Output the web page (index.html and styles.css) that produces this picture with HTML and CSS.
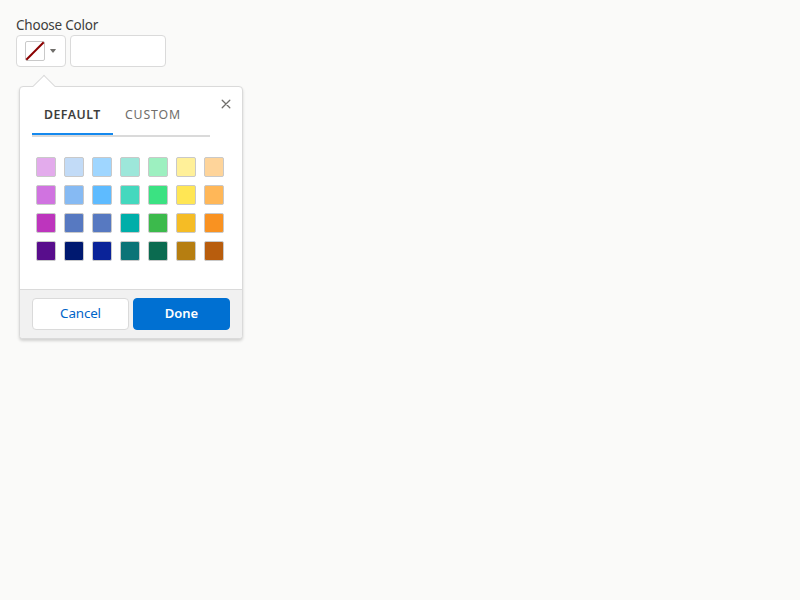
FILE: index.html
```html
<!DOCTYPE html>
<html lang="en">
<head>
<meta charset="utf-8">
<title>Color Picker</title>
<link rel="stylesheet" href="styles.css">
</head>
<body>
<div class="picker">
  <label class="label" for="hex">Choose Color</label>
  <div class="controls">
    <button class="trigger" aria-label="Choose color">
      <svg class="empty" width="20" height="20" viewBox="0 0 20 20"><rect x=".5" y=".5" width="19" height="19" rx="1.5" fill="#fff" stroke="#c9c9c9"/><path d="M1.3 18.7 18.7 1.3" stroke="#8b0000" stroke-width="2"/></svg>
      <svg class="caret" width="6" height="4" viewBox="0 0 6 4"><path d="M.5 0h5q.6 0 .3.5L3.4 3.6q-.4.4-.8 0L.2.5Q-.1 0 .5 0z" fill="#706e6b"/></svg>
    </button>
    <input class="hex" id="hex" type="text">
  </div>
  <section class="popover">
    <span class="nub"></span>
    <button class="close" aria-label="Close"><svg width="10" height="10" viewBox="0 0 10 10"><path d="M1.2 1.2l7.6 7.6M8.8 1.2L1.2 8.8" stroke="#706e6b" stroke-width="1.3" stroke-linecap="round"/></svg></button>
    <div class="body">
      <div class="tabs">
        <a class="tab active">Default</a>
        <a class="tab">Custom</a>
      </div>
      <div class="swatches">
        <i style="background:#e3abec"></i><i style="background:#c2dbf7"></i><i style="background:#9fd6ff"></i><i style="background:#9de7da"></i><i style="background:#9df0c0"></i><i style="background:#fff099"></i><i style="background:#fed49a"></i>
        <i style="background:#d073e0"></i><i style="background:#86baf3"></i><i style="background:#5ebbff"></i><i style="background:#44d8be"></i><i style="background:#3be282"></i><i style="background:#ffe654"></i><i style="background:#ffb758"></i>
        <i style="background:#bd35bd"></i><i style="background:#5779c1"></i><i style="background:#5779c1"></i><i style="background:#00aea9"></i><i style="background:#3cba4c"></i><i style="background:#f5bc25"></i><i style="background:#f99221"></i>
        <i style="background:#580d8c"></i><i style="background:#001970"></i><i style="background:#0a2399"></i><i style="background:#0b7477"></i><i style="background:#0b6b50"></i><i style="background:#b67e11"></i><i style="background:#b85d0d"></i>
      </div>
    </div>
    <footer class="footer">
      <button class="btn">Cancel</button>
      <button class="btn brand">Done</button>
    </footer>
  </section>
</div>
</body>
</html>
```
FILE: styles.css
```css
* { box-sizing: border-box; }
body {
  margin: 0;
  padding: 16px;
  background: #fafaf9;
  color: #3e3e3c;
  font: 13px/19px "Noto Sans", sans-serif;
}
button { font: inherit; padding: 0; }
.label {
  display: block;
  height: 19px;
  font-size: 13.5px;
  letter-spacing: -.22px;
}
.controls { display: flex; gap: 4px; }
.trigger, .hex {
  height: 32px;
  margin: 0;
  background: #fff;
  border: 1px solid #dadada;
  border-radius: 4px;
}
.trigger {
  display: flex;
  align-items: center;
  width: 50px;
  padding-left: 8px;
}
.caret { margin-left: 5px; }
.hex { width: 96px; }
.popover {
  position: relative;
  width: 224px;
  height: 253px;
  margin: 19px 0 0 3px;
  display: flex;
  flex-direction: column;
  background: #fff;
  border: 1px solid #dadada;
  border-radius: 4px;
  box-shadow: 0 2px 3px rgba(0, 0, 0, .16);
}
.nub {
  position: absolute;
  left: 16px;
  top: -9px;
  width: 16px;
  height: 16px;
  transform: rotate(45deg);
  background: #fff;
  border: solid #dadada;
  border-width: 1px 0 0 1px;
}
.close {
  position: absolute;
  right: 11px;
  top: 12px;
  width: 10px;
  height: 10px;
  border: 0;
  background: none;
}
.close svg { display: block; }
.body { flex: 1; padding: 10px 12px 0; position: relative; }
.tabs {
  display: flex;
  width: 178px;
  height: 40px;
  border-bottom: 2px solid #dadada;
}
.tab {
  padding: 0 12px;
  line-height: 36px;
  height: 38px;
  font-size: 12.3px;
  letter-spacing: .85px;
  text-transform: uppercase;
  color: #706e6b;
  white-space: nowrap;
}
.tab.active {
  width: 81px;
  color: #3e3e3c;
  font-size: 12.3px;
  font-weight: 600;
  letter-spacing: .5px;
  border-bottom: 2px solid #1589ee;
}
.swatches {
  display: grid;
  grid-template-columns: repeat(7, 20px);
  gap: 8px;
  padding: 20px 4px 0;
}
.swatches i { height: 20px; border: 1px solid #c9c9c9; border-radius: 2px; }
.footer {
  display: flex;
  gap: 4px;
  height: 49px;
  padding: 8px 12px;
  background: #f1f1f1;
  border-top: 1px solid #dadada;
  border-radius: 0 0 3px 3px;
}
.btn {
  flex: 1;
  height: 32px;
  padding-bottom: 2px;
  border: 1px solid #dadada;
  border-radius: 4px;
  background: #fff;
  color: #0064c8;
  font-size: 13.4px;
  letter-spacing: -.15px;
}
.brand {
  background: #0070d2;
  border-color: #0070d2;
  color: #fff;
  font-size: 13px;
  font-weight: 600;
  letter-spacing: 0;
}
```
